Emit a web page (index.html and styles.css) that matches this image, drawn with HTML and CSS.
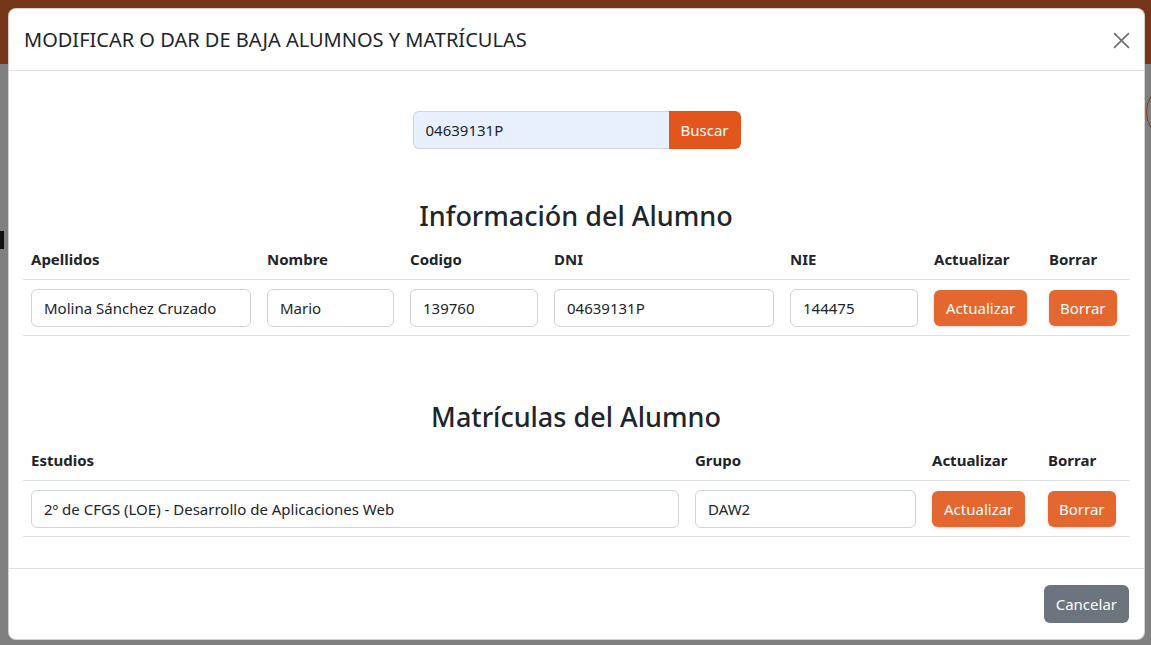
FILE: index.html
```html
<!DOCTYPE html>
<html lang="es">
<head>
<meta charset="utf-8">
<title>Modificar o dar de baja alumnos y matrículas</title>
<link rel="stylesheet" href="styles.css">
</head>
<body>
<div class="page">
  <div class="page-top"></div>
  <div class="page-rest">
    <span class="bg-mark"></span>
    <span class="bg-circle"></span>
  </div>
</div>

<div class="modal">
  <div class="modal-header">
    <h5 class="modal-title">MODIFICAR O DAR DE BAJA ALUMNOS Y MATRÍCULAS</h5>
    <button class="btn-close" type="button" aria-label="Cerrar">
      <svg width="17" height="17" viewBox="0 0 16 16"><path d="M1 1L15 15M15 1L1 15" stroke="#6d6d6d" stroke-width="1.5" fill="none"/></svg>
    </button>
  </div>
  <div class="modal-body">
    <div class="search">
      <input class="search-input" type="text" value="04639131P">
      <button class="btn btn-search" type="button">Buscar</button>
    </div>

    <h3 class="section-title first">Información del Alumno</h3>
    <table class="tbl">
      <colgroup>
        <col class="c236"><col class="c143"><col class="c144"><col class="c236"><col class="c144"><col class="c115"><col class="c88">
      </colgroup>
      <thead>
        <tr><th>Apellidos</th><th>Nombre</th><th>Codigo</th><th>DNI</th><th>NIE</th><th>Actualizar</th><th>Borrar</th></tr>
      </thead>
      <tbody>
        <tr>
          <td><input class="field" type="text" value="Molina Sánchez Cruzado"></td>
          <td><input class="field" type="text" value="Mario"></td>
          <td><input class="field" type="text" value="139760"></td>
          <td><input class="field" type="text" value="04639131P"></td>
          <td><input class="field" type="text" value="144475"></td>
          <td><button class="btn btn-orange" type="button">Actualizar</button></td>
          <td><button class="btn btn-orange btn-narrow" type="button">Borrar</button></td>
        </tr>
      </tbody>
    </table>

    <h3 class="section-title second">Matrículas del Alumno</h3>
    <table class="tbl">
      <colgroup>
        <col class="c664"><col class="c237"><col class="c116"><col class="c89">
      </colgroup>
      <thead>
        <tr><th>Estudios</th><th>Grupo</th><th>Actualizar</th><th>Borrar</th></tr>
      </thead>
      <tbody>
        <tr>
          <td><input class="field" type="text" value="2º de CFGS (LOE) - Desarrollo de Aplicaciones Web"></td>
          <td><input class="field" type="text" value="DAW2"></td>
          <td><button class="btn btn-orange" type="button">Actualizar</button></td>
          <td><button class="btn btn-orange btn-narrow" type="button">Borrar</button></td>
        </tr>
      </tbody>
    </table>
  </div>
  <div class="modal-footer">
    <button class="btn btn-secondary" type="button">Cancelar</button>
  </div>
</div>
</body>
</html>
```

FILE: styles.css
```css
* { box-sizing: border-box; }
html, body { margin: 0; padding: 0; }
body {
  width: 1151px;
  height: 645px;
  overflow: hidden;
  font-family: "Noto Sans", "Open Sans", sans-serif;
  font-size: 16px;
  color: #212529;
  position: relative;
}
.page { height: 645px; display: flex; flex-direction: column; }
.page-top { height: 64px; background: #743519; }
.page-rest { flex: 1; background: #808080; position: relative; }
.bg-mark { position: absolute; left: 0; top: 167px; width: 4px; height: 18px; background: #111; }
.bg-circle { position: absolute; left: 1146px; top: 24px; width: 40px; height: 48px; border: 1px solid #7a3a1c; border-radius: 50%; }

.modal {
  position: absolute;
  left: 8px;
  top: 8px;
  width: 1137px;
  background: #fff;
  border: 1px solid rgba(0,0,0,.175);
  border-radius: 8px;
}
.modal-header {
  display: flex;
  align-items: center;
  justify-content: space-between;
  height: 62px;
  padding: 0 15px;
  border-bottom: 1px solid #dee2e6;
}
.modal-title {
  margin: 0;
  font-size: 20px;
  font-weight: 400;
  line-height: 30px;
}
.btn-close {
  width: 30px;
  height: 30px;
  border: 0;
  background: transparent;
  padding: 0;
  display: flex;
  align-items: center;
  justify-content: center;
  margin-right: -7px;
  margin-top: 1px;
}
.modal-body { padding: 40px 15px 31px 14px; }

.search { display: flex; justify-content: center; margin-left: 1px; }
.search-input {
  width: 256px;
  height: 38px;
  border: 1px solid #ced4da;
  border-right: 0;
  border-radius: 6px 0 0 6px;
  background: #e8f0fe;
  padding: 6px 12px;
  font: inherit;
  font-size: 15px;
  color: #212529;
}
.btn {
  border: 0;
  border-radius: 6px;
  font-family: inherit;
  font-size: 15px;
  color: #fff;
  padding: 0 12px;
  height: 36px;
  line-height: 36px;
  cursor: pointer;
}
.btn-narrow { padding: 0 11px; }
.btn-search { height: 38px; width: 72px; padding: 0; background: #e2561e; border-radius: 0 6px 6px 0; }

.section-title {
  margin: 0 0 6px;
  text-align: center;
  font-size: 27px;
  font-weight: 500;
  line-height: 34px;
}
.section-title.first { margin-top: 50px; }
.section-title.second { margin-top: 64px; }

.tbl { width: 1107px; border-collapse: collapse; table-layout: fixed; }
.c236 { width: 236px; } .c143 { width: 143px; } .c144 { width: 144px; }
.c115 { width: 115px; } .c88 { width: 89px; }
.c664 { width: 664px; } .c237 { width: 237px; } .c116 { width: 116px; } .c89 { width: 90px; }
.tbl th {
  text-align: left;
  font-weight: 700;
  font-size: 15px;
  line-height: 24px;
  padding: 8px;
  border-bottom: 1px solid #dee2e6;
}
.tbl td {
  padding: 9px 8px 8px;
  border-bottom: 1px solid #dee2e6;
  vertical-align: middle;
}
.field {
  width: 100%;
  height: 38px;
  border: 1px solid #ced4da;
  border-radius: 6px;
  padding: 6px 12px;
  font: inherit;
  font-size: 15px;
  color: #212529;
  background: #fff;
}
.btn-orange { background: #e4672f; box-shadow: 0 1px 3px rgba(0,0,0,.15); }

.modal-footer {
  display: flex;
  justify-content: flex-end;
  padding: 16px 15px 16px;
  border-top: 1px solid #dee2e6;
}
.btn-secondary { background: #6c757d; height: 38px; line-height: 38px; padding: 0 12px; }
```
